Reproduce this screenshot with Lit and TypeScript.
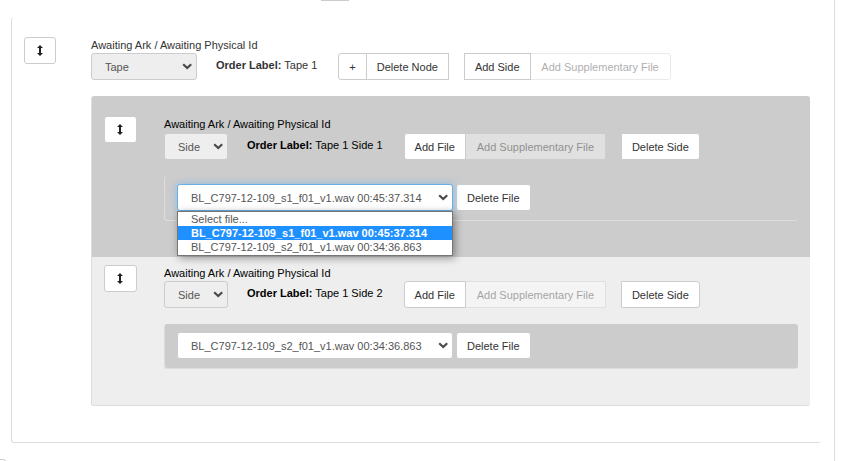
import { LitElement, html, css, svg, nothing } from "lit";
import { customElement, property, state } from "lit/decorators.js";

const base = css`
  * {
    box-sizing: border-box;
  }
  button,
  select {
    margin: 0;
    font: inherit;
    line-height: 15px;
  }
  .btn {
    height: 27px;
    padding: 2px 10px 0;
    border: 1px solid #ccc;
    background: #fff;
    color: #333;
    white-space: nowrap;
  }
  .btn:disabled {
    opacity: 0.4;
  }
  .btn + .btn {
    margin-left: -1px;
  }
  .first {
    border-radius: 3px 0 0 3px;
  }
  .last {
    border-radius: 0 3px 3px 0;
  }
  .round {
    border-radius: 3px;
  }
`;

@customElement("styled-select")
export class StyledSelect extends LitElement {
  static styles = [
    base,
    css`
      :host {
        position: relative;
        display: grid;
        height: 27px;
      }
      select {
        grid-area: 1 / 1;
        width: 100%;
        height: 27px;
        padding: 2px 13px 0;
        border: 1px solid #ccc;
        border-radius: 3px;
        background: #fff;
        color: #555;
        appearance: none;
        outline: none;
      }
      .grey {
        background: #eee;
      }
      .open {
        border-color: #66afe9;
        box-shadow: 0 0 8px rgba(102, 175, 233, 0.6);
      }
      svg {
        grid-area: 1 / 1;
        place-self: center end;
        margin-right: 4px;
        pointer-events: none;
      }
      .menu {
        position: absolute;
        z-index: 1;
        top: 27px;
        left: 0;
        right: 0;
        margin: 0;
        padding: 0 0 1px;
        border: 1px solid #767676;
        background: #fff;
        box-shadow: 2px 2px 8px rgba(0, 0, 0, 0.4);
        color: #555;
        line-height: 14px;
        list-style: none;
      }
      .option {
        padding: 0 13px;
        white-space: nowrap;
      }
      .current {
        background: #1e90ff;
        color: #fff;
        font-weight: bold;
      }
    `,
  ];

  @property() label = "";
  @property({ type: Array }) options: string[] = [];
  @property() value = "";
  @property({ type: Boolean }) grey = false;
  @property({ type: Boolean }) open = false;

  private pick(value: string) {
    this.value = value;
    this.open = false;
  }

  render() {
    return html`
      <select
        class="${this.grey ? "grey" : ""} ${this.open ? "open" : ""}"
        aria-label=${this.label}
        @change=${(e: Event) => this.pick((e.target as HTMLSelectElement).value)}
      >
        ${this.options.map(
          (o) => html`<option ?selected=${o === this.value}>${o}</option>`
        )}
      </select>
      <svg width="11" height="8" viewBox="0 0 11 8" aria-hidden="true">
        <path d="M1.2 1.2 L5.2 5 L9.2 1.2" fill="none" stroke="#4a4a4a" stroke-width="2.2" />
      </svg>
      ${this.open
        ? html`<ul class="menu" role="listbox" aria-label=${this.label}>
            ${this.options.map(
              (o) => html`<li
                class="option ${o === this.value ? "current" : ""}"
                role="option"
                aria-selected=${o === this.value}
                @click=${() => this.pick(o)}
              >${o}</li>`
            )}
          </ul>`
        : nothing}
    `;
  }
}

const moveIcon = svg`<svg width="7" height="11" viewBox="0 0 7 11" aria-hidden="true">
  <path d="M3 0 L6 3 H4 V8 H6 L3 11 L0 8 H2 V3 H0 Z" fill="#222" />
</svg>`;

interface Side {
  name: string;
  file: string;
  open: boolean;
}

const FILES = [
  "Select file...",
  "BL_C797-12-109_s1_f01_v1.wav 00:45:37.314",
  "BL_C797-12-109_s2_f01_v1.wav 00:34:36.863",
];

@customElement("app-root")
export class AppRoot extends LitElement {
  static styles = [
    base,
    css`
      :host {
        display: block;
        font: 11px/15px "Liberation Sans", Arial, sans-serif;
        color: #333;
      }
      .page {
        height: 100vh;
        margin-right: 14px;
        border-right: 1px solid #ddd;
        overflow: hidden;
      }
      .previous {
        width: 28px;
        height: 1px;
        margin-left: 321px;
        background: #ccc;
      }
      .next {
        width: 6px;
        height: 24px;
        margin-top: 16px;
        border: 1px solid #ccc;
        border-left: 0;
        border-radius: 0 3px 3px 0;
      }
      .panel {
        margin: 16px 13px 0 11px;
        padding: 20px 11px 36px 12px;
        border: 1px solid #ddd;
        border-width: 0 0 1px 1px;
        border-radius: 3px;
      }
      .node {
        display: grid;
        grid-template-columns: 67px 1fr;
      }
      .handle {
        display: grid;
        place-items: center;
        width: 32px;
        padding: 0;
      }
      .meta {
        padding-top: 1px;
      }
      .controls {
        display: flex;
        align-items: flex-start;
      }
      .order {
        margin: 0 21px 0 19px;
        line-height: 24px;
        white-space: nowrap;
      }
      .group {
        display: flex;
        margin-right: 15px;
      }
      .supplementary {
        min-width: 141px;
      }
      .kind {
        width: 106px;
      }
      .sides {
        margin-top: 16px;
        border: 1px solid #ddd;
        border-width: 0 0 1px 1px;
        border-radius: 3px;
        background: #eee;
        color: #000;
        overflow: hidden;
      }
      .side {
        display: grid;
        grid-template-columns: 60px 1fr;
        padding: 8px 12px 36px;
      }
      .side .kind {
        width: 64px;
      }
      .side .handle {
        width: 33px;
      }
      .shaded {
        margin-left: -1px;
        padding: 20px 12px 36px 13px;
        background: #ccc;
      }
      .shaded .controls {
        margin-top: 1px;
      }
      .file {
        display: flex;
        gap: 3px;
        margin-top: 16px;
        padding: 8px 12px 9px;
        border: 1px solid #ddd;
        border-width: 0 0 1px 1px;
        border-radius: 3px;
        background: #ccc;
      }
      .name {
        width: 276px;
      }
    `,
  ];

  @state() private sides: Side[] = [
    { name: "Tape 1 Side 1", file: FILES[1], open: true },
    { name: "Tape 1 Side 2", file: FILES[2], open: false },
  ];

  private renderSide(side: Side) {
    return html`<section class="side ${side.open ? "shaded" : ""}">
      <button class="btn round handle" aria-label="Move ${side.name}">${moveIcon}</button>
      <div>
        <div class="meta">Awaiting Ark / Awaiting Physical Id</div>
        <div class="controls">
          <styled-select class="kind" grey label="Type of ${side.name}" value="Side" .options=${["Side"]}></styled-select>
          <div class="order"><b>Order Label:</b> ${side.name}</div>
          <div class="group">
            <button class="btn first">Add File</button>
            <button class="btn supplementary" disabled>Add Supplementary File</button>
          </div>
          <button class="btn last">Delete Side</button>
        </div>
        <div class="file">
          <styled-select class="name" label="File of ${side.name}" .value=${side.file} .options=${FILES} ?open=${side.open}></styled-select>
          <button class="btn round">Delete File</button>
        </div>
      </div>
    </section>`;
  }

  render() {
    return html`<div class="page">
      <div class="previous"></div>
      <main class="panel">
        <section class="node">
          <button class="btn round handle" aria-label="Move Tape 1">${moveIcon}</button>
          <div>
            <div class="meta">Awaiting Ark / Awaiting Physical Id</div>
            <div class="controls">
              <styled-select class="kind" grey label="Type of Tape 1" value="Tape" .options=${["Tape"]}></styled-select>
              <div class="order"><b>Order Label:</b> Tape 1</div>
              <div class="group">
                <button class="btn first">+</button>
                <button class="btn">Delete Node</button>
              </div>
              <button class="btn">Add Side</button>
              <button class="btn last supplementary" disabled>Add Supplementary File</button>
            </div>
            <div class="sides">${this.sides.map((s) => this.renderSide(s))}</div>
          </div>
        </section>
      </main>
      <div class="next"></div>
    </div>`;
  }
}
